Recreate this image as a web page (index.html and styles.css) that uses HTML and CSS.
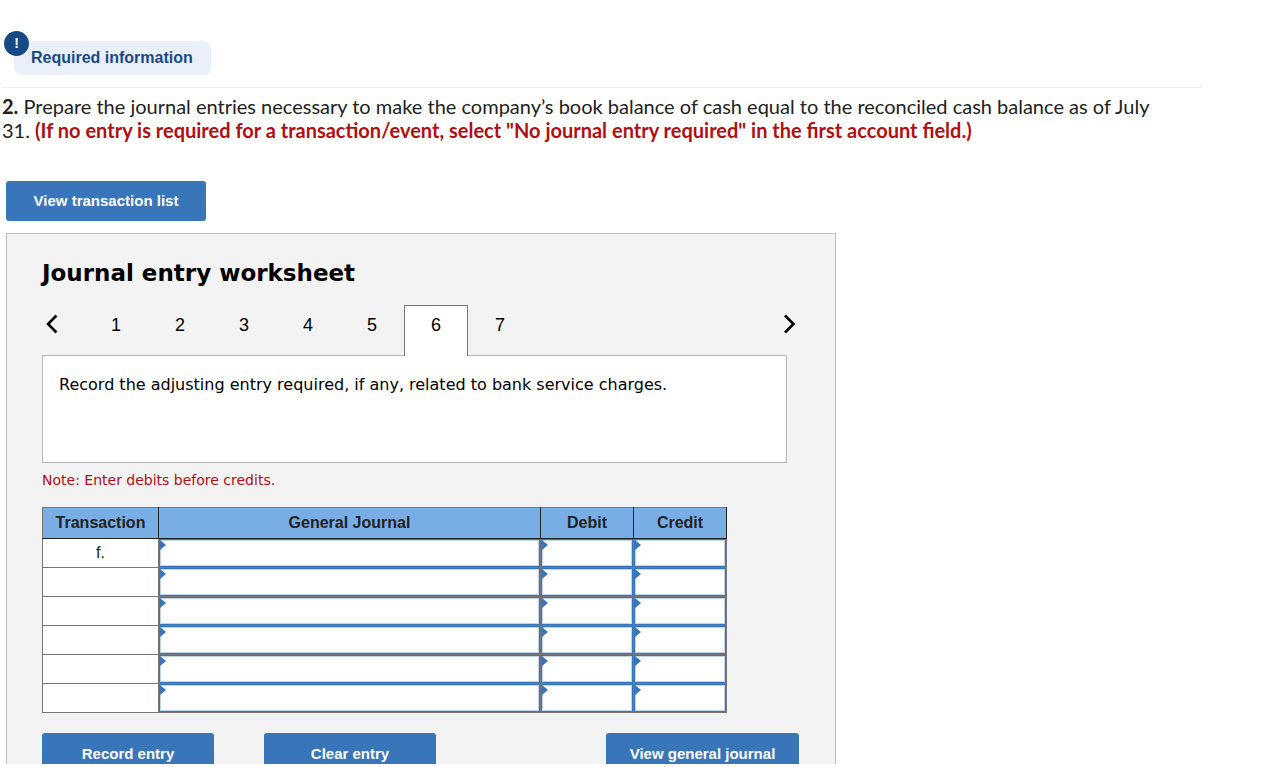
FILE: index.html
```html
<!DOCTYPE html>
<html lang="en">
<head>
<meta charset="utf-8">
<title>Journal entry worksheet</title>
<link rel="stylesheet" href="styles.css">
</head>
<body>
<main class="viewport">
  <header class="required">
    <span class="required-label">Required information</span>
    <span class="required-badge">!</span>
  </header>
  <p class="question"><b>2.</b> Prepare the journal entries necessary to make the company’s book balance of cash equal to the reconciled cash balance as of July 31. <strong class="warning">(If no entry is required for a transaction/event, select "No journal entry required" in the first account field.)</strong></p>
  <button class="button view-list" type="button">View transaction list</button>
  <section class="sheet">
    <h1 class="sheet-title">Journal entry worksheet</h1>
    <nav class="tabs" aria-label="Entries">
      <button class="arrow" type="button" aria-label="Previous"><svg width="12" height="20" viewBox="0 0 12 20" fill="none" stroke="#000" stroke-width="2.6"><path d="M10.5 1.5 2 10l8.500 8.500"/></svg></button>
      <div class="tab-list">
        <button class="tab" type="button">1</button>
        <button class="tab" type="button">2</button>
        <button class="tab" type="button">3</button>
        <button class="tab" type="button">4</button>
        <button class="tab" type="button">5</button>
        <button class="tab tab-active" type="button" aria-current="true">6</button>
        <button class="tab" type="button">7</button>
      </div>
      <button class="arrow" type="button" aria-label="Next"><svg width="12" height="20" viewBox="0 0 12 20" fill="none" stroke="#000" stroke-width="2.6"><path d="m1 1.5 8.500 8.500-8.500 8.500"/></svg></button>
    </nav>
    <p class="prompt">Record the adjusting entry required, if any, related to bank service charges.</p>
    <p class="note">Note: Enter debits before credits.</p>
    <table class="journal">
      <colgroup><col class="col-transaction"><col><col class="col-amount"><col class="col-amount"></colgroup>
      <thead>
        <tr><th scope="col">Transaction</th><th scope="col">General Journal</th><th scope="col">Debit</th><th scope="col">Credit</th></tr>
      </thead>
      <tbody>
        <tr><td>f.</td><td><label class="entry"><input type="text" aria-label="Account, line 1"></label></td><td><label class="entry"><input type="text" aria-label="Debit, line 1"></label></td><td><label class="entry"><input type="text" aria-label="Credit, line 1"></label></td></tr>
        <tr><td></td><td><label class="entry"><input type="text" aria-label="Account, line 2"></label></td><td><label class="entry"><input type="text" aria-label="Debit, line 2"></label></td><td><label class="entry"><input type="text" aria-label="Credit, line 2"></label></td></tr>
        <tr><td></td><td><label class="entry"><input type="text" aria-label="Account, line 3"></label></td><td><label class="entry"><input type="text" aria-label="Debit, line 3"></label></td><td><label class="entry"><input type="text" aria-label="Credit, line 3"></label></td></tr>
        <tr><td></td><td><label class="entry"><input type="text" aria-label="Account, line 4"></label></td><td><label class="entry"><input type="text" aria-label="Debit, line 4"></label></td><td><label class="entry"><input type="text" aria-label="Credit, line 4"></label></td></tr>
        <tr><td></td><td><label class="entry"><input type="text" aria-label="Account, line 5"></label></td><td><label class="entry"><input type="text" aria-label="Debit, line 5"></label></td><td><label class="entry"><input type="text" aria-label="Credit, line 5"></label></td></tr>
        <tr><td></td><td><label class="entry"><input type="text" aria-label="Account, line 6"></label></td><td><label class="entry"><input type="text" aria-label="Debit, line 6"></label></td><td><label class="entry"><input type="text" aria-label="Credit, line 6"></label></td></tr>
      </tbody>
    </table>
    <div class="actions">
      <button class="button" type="button">Record entry</button>
      <button class="button" type="button">Clear entry</button>
      <button class="button view-journal" type="button">View general journal</button>
    </div>
  </section>
</main>
</body>
</html>
```
FILE: styles.css
```css
* { box-sizing: border-box; }

body {
  margin: 0;
  padding-bottom: 3px;
  height: 100vh;
  background: #fff;
  color: #222;
  font-family: "Liberation Sans", Arial, sans-serif;
}

.viewport {
  height: 100%;
  overflow: hidden;
}

.required {
  position: relative;
  margin: 0 73px 0 2px;
  padding: 41px 0 12px 12px;
  border-bottom: 1px solid #eee;
}

.required-label {
  display: inline-block;
  padding: 0 18px 0 17px;
  border-radius: 8px;
  background: #eaf0f9;
  color: #174a85;
  font-size: 16px;
  font-weight: bold;
  line-height: 34px;
  vertical-align: top;
}

.required-badge {
  position: absolute;
  top: 31px;
  left: 2px;
  width: 25px;
  height: 25px;
  border-radius: 50%;
  background: #174a85;
  color: #fff;
  font-size: 14px;
  font-weight: bold;
  line-height: 25px;
  text-align: center;
}

.question {
  margin: 6px 110px 39px 2px;
  font-family: Lato, sans-serif;
  font-size: 20px;
  line-height: 24px;
}

.warning { color: #b00e12; }

.button {
  height: 40px;
  padding: 0 6px 1px;
  border: 0;
  border-radius: 3px;
  background: #3975b9;
  color: #fff;
  font: bold 15px "Liberation Sans", Arial, sans-serif;
}

.view-list {
  display: block;
  width: 200px;
  margin-left: 6px;
}

.sheet {
  max-width: 830px;
  margin: 12px 6px 0;
  padding: 24px 35px;
  border: 1px solid #c0c0c0;
  background: #f3f3f3;
  color: #000;
}

.sheet-title {
  margin: 0;
  font: bold 23px/30px "DejaVu Sans", Verdana, sans-serif;
}

.tabs {
  position: relative;
  display: flex;
  align-items: flex-start;
  margin-top: 17px;
  margin-bottom: -1px;
}

.arrow {
  display: flex;
  padding: 9px 4px;
  border: 0;
  background: none;
}

.tab-list {
  display: flex;
  flex: 1;
  margin-left: 22px;
}

.tab {
  width: 64px;
  height: 51px;
  padding: 0 0 11px;
  border: 1px solid transparent;
  border-bottom: 0;
  background: none;
  color: #000;
  font: 18px "Liberation Sans", Arial, sans-serif;
}

.tab-active {
  border-color: #777;
  background: #fff;
}

.prompt {
  min-height: 108px;
  margin: 0 13px 0 0;
  padding: 16px;
  border: 1px solid #b5b5b5;
  background: #fff;
  font: 16px/25px "DejaVu Sans", Verdana, sans-serif;
}

.note {
  margin: 7px 0 17px;
  color: #b00e12;
  font: 14px/20px "DejaVu Sans", Verdana, sans-serif;
}

.journal {
  width: calc(100% - 73px);
  border-collapse: collapse;
  table-layout: fixed;
  background: #fff;
  color: #222;
  font-size: 16px;
}

.col-transaction { width: 116px; }
.col-amount { width: 93px; }

.journal th {
  height: 31px;
  padding: 0;
  border: 1px solid #222;
  border-top-color: #777;
  background: #79ade6;
}

.journal th:first-child { border-left-color: #777; }

.journal td {
  height: 29px;
  padding: 0;
  border: 1px solid #777;
  text-align: center;
}

.journal thead + tbody tr:first-child td { border-top-color: #222; }

.entry {
  position: relative;
  display: block;
}

.entry::after {
  content: "";
  position: absolute;
  top: 1px;
  left: 1px;
  border: solid transparent;
  border-width: 5px 0 5px 6px;
  border-left-color: #3975b9;
}

.entry input {
  display: block;
  width: 100%;
  height: 28px;
  padding: 0 8px;
  border: 1px solid #3975b9;
  border-radius: 0;
  background: #fff;
  box-shadow: inset 0 0 0 1px #c0d4eb;
  font: inherit;
}

.actions {
  display: flex;
  gap: 50px;
  margin: 20px 1px 0 0;
}

.actions .button {
  width: 172px;
  height: 42px;
}

.actions .view-journal {
  width: 193px;
  margin-left: auto;
}
```
